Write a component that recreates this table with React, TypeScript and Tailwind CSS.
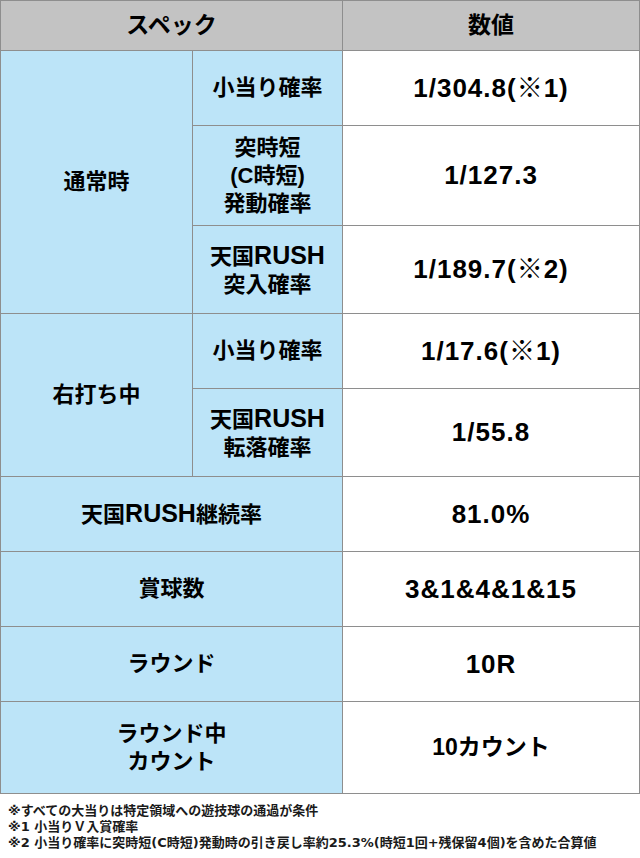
import React from "react";

const font = { fontFamily: '"Liberation Sans", "Noto Sans CJK JP", sans-serif' };
const noteFont = { fontFamily: '"DejaVu Sans", "Noto Sans CJK JP", sans-serif' };

const blue = "flex items-center justify-center text-center bg-[#bce4f8] text-[22px] leading-[28px] font-bold text-black";
const value = "flex items-center justify-center text-center bg-white text-[26px] tracking-[1px] font-bold text-black";

const Rush = () => <span className="text-[25px]">RUSH</span>;

export default function App() {
  return (
    <div className="w-[640px] h-[858px] bg-white" style={font}>
      <div className="grid w-[640px] grid-cols-[191px_149px_296px] grid-rows-[49px_74px_99px_87px_74px_87px_74px_74px_74px_91px] gap-px border border-[#8e8e8e] bg-[#8e8e8e]">
        <div className="col-span-2 flex items-center justify-center bg-[#c3c3c3] text-[23px] font-bold">スペック</div>
        <div className="flex items-center justify-center bg-[#c3c3c3] text-[23px] font-bold">数値</div>

        <div className={`${blue} row-span-3`}>通常時</div>
        <div className={blue}>小当り確率</div>
        <div className={value}>1/304.8(※1)</div>
        <div className={blue}>
          突時短<br />(C時短)<br />発動確率
        </div>
        <div className={value}>1/127.3</div>
        <div className={blue}>
          <span>天国<Rush /><br />突入確率</span>
        </div>
        <div className={value}>1/189.7(※2)</div>

        <div className={`${blue} row-span-2`}>右打ち中</div>
        <div className={blue}>小当り確率</div>
        <div className={value}>1/17.6(※1)</div>
        <div className={blue}>
          <span>天国<Rush /><br />転落確率</span>
        </div>
        <div className={value}>1/55.8</div>

        <div className={`${blue} col-span-2`}>
          <span>天国<Rush />継続率</span>
        </div>
        <div className={value}>81.0%</div>
        <div className={`${blue} col-span-2`}>賞球数</div>
        <div className={value}>3&amp;1&amp;4&amp;1&amp;15</div>
        <div className={`${blue} col-span-2`}>ラウンド</div>
        <div className={value}>10R</div>
        <div className={`${blue} col-span-2`}>
          ラウンド中<br />カウント
        </div>
        <div className="flex items-center justify-center bg-white text-[23px] font-bold text-black">10カウント</div>
      </div>

      <div className="px-[8px] pt-[9px] text-[13px] leading-[16px] font-bold text-[#1a1a1a]" style={noteFont}>
        <p>※すべての大当りは特定領域への遊技球の通過が条件</p>
        <p>※1 小当りＶ入賞確率</p>
        <p>※2 小当り確率に突時短(C時短)発動時の引き戻し率約25.3%(時短1回+残保留4個)を含めた合算値</p>
      </div>
    </div>
  );
}
